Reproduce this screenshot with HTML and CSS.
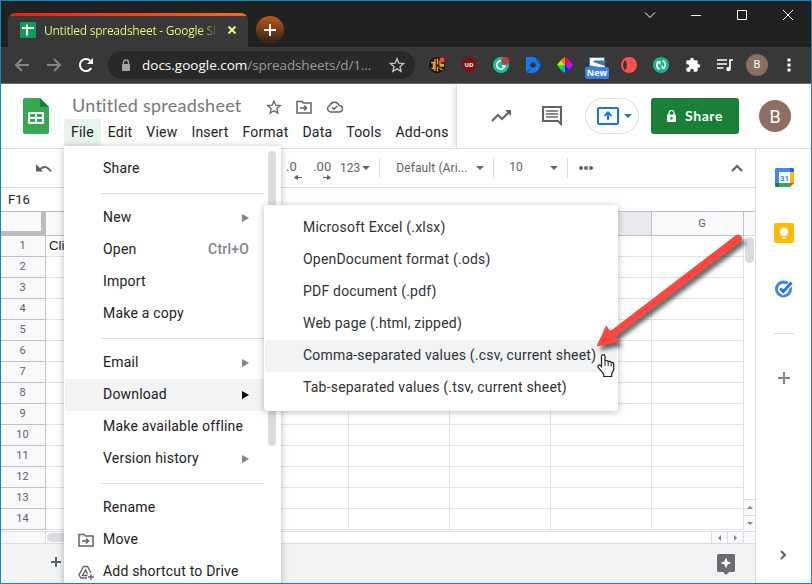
FILE: index.html
```html
<!DOCTYPE html>
<html lang="en">
<head>
  <meta charset="UTF-8" />
  <meta name="viewport" content="width=device-width, initial-scale=1.0"/>
  <title>Untitled spreadsheet - Google Sheets</title>
  <link rel="stylesheet" href="styles.css">
</head>
<body>
<div class="window">

  <!-- Tab strip -->
  <div class="titlebar">
    <div class="tab">
      <svg class="favicon" width="16" height="16" viewBox="0 0 16 16"><rect width="16" height="16" rx="1" fill="#0f9d58"/><path d="M2 6h12M7 2.5v11" stroke="#fff" stroke-width="2"/></svg>
      <span class="tab-title">Untitled spreadsheet - Google Sh</span>
      <svg class="tab-close" width="10" height="10" viewBox="0 0 10 10"><path d="M1.5 1.5l7 7M8.500 1.500l-7 7" stroke="#f4ff70" stroke-width="1.8"/></svg>
    </div>
    <div class="new-tab"><svg width="28" height="28" viewBox="0 0 28 28"><path d="M14 8v12M8 14h12" stroke="#fff" stroke-width="2"/></svg></div>
    <div class="win-buttons">
      <svg width="12" height="12" viewBox="0 0 12 12"><path d="M1 3.500l5 5 5-5"/></svg>
      <svg width="12" height="12" viewBox="0 0 12 12"><path d="M1 6.500h10"/></svg>
      <svg width="12" height="12" viewBox="0 0 12 12"><path d="M1.500 1.500h9v9h-9z"/></svg>
      <svg width="12" height="12" viewBox="0 0 12 12"><path d="M1 1l10 10M11 1L1 11"/></svg>
    </div>
  </div>

  <!-- Address bar -->
  <div class="browserbar">
    <div class="nav-icons">
      <svg width="16" height="16" viewBox="0 0 16 16"><path d="M15 8H2M8 2L2 8l6 6" stroke="#858585"/></svg>
      <svg width="16" height="16" viewBox="0 0 16 16"><path d="M1 8h13M8 2l6 6-6 6" stroke="#858585"/></svg>
      <svg width="16" height="16" viewBox="0 0 16 16"><path d="M13.200 11A6 6 0 1 1 12.200 3.800" stroke="#fff" stroke-width="2.200"/><path d="M15 1v6H9z" fill="#fff"/></svg>
    </div>
    <div class="omnibox">
      <svg width="10" height="13" viewBox="0 0 10 13"><path d="M2.500 6V3.500a2.500 2.500 0 0 1 5 0V6" fill="none" stroke="#a5a5a5" stroke-width="1.400"/><rect x="1" y="5" width="8" height="7" rx="1" fill="#a5a5a5"/></svg>
      <span class="url"><b>docs.google.com</b>/spreadsheets/d/1...</span>
      <svg class="bookmark" width="16" height="16" viewBox="0 0 24 24"><path d="M12 2.500l2.800 6.700 7.200.6-5.500 4.700 1.700 7.100-6.200-3.800-6.200 3.800 1.700-7.100L2 9.800l7.200-.6z" fill="none" stroke="#c4c4c4" stroke-width="2"/></svg>
    </div>
    <div class="extensions">
      <svg width="16" height="16" viewBox="0 0 16 16"><circle cx="8" cy="8" r="8" fill="#181410"/><path d="M2 5.500h2.500v6H2.500M6 2v12M8.500 1.500v6M8.500 9.500v5M11 4v3.500h4M10.500 9h4.500M10.500 11l3 2" fill="none" stroke="#f3a52b" stroke-width="1.400"/><circle cx="13" cy="3" r="2.500" fill="#f44"/></svg>
      <svg width="16" height="16" viewBox="0 0 16 16"><path d="M8 0c2 1.300 4 2 7 2v5c0 4-2.500 7-7 9-4.500-2-7-5-7-9V2c3 0 5-.7 7-2z" fill="#800f12"/><text x="8" y="9.500" text-anchor="middle" class="ublock">UD</text></svg>
      <svg width="16" height="16" viewBox="0 0 16 16"><circle cx="8" cy="8" r="8" fill="#15c39a"/><path d="M10 4.300A4.200 4.200 0 1 0 12 9H9" fill="none" stroke="#fff" stroke-width="1.600"/><circle cx="12" cy="4" r="3.300" fill="#6d5750" stroke="#e0343f" stroke-width="1.300"/><path d="M10 6l4-4" stroke="#e0343f" stroke-width="1.300"/></svg>
      <svg width="16" height="16" viewBox="0 0 16 16"><path d="M1 0h6a8 8 0 1 1 0 16H1z" fill="#1778f2"/><circle cx="8" cy="8" r="2.700" fill="#333"/><path d="M1 16l4-3.500M11 2l2 2M12 5l2 1" stroke="#0a3b8c"/></svg>
      <svg width="16" height="16" viewBox="0 0 16 16"><path d="M8 8V0l4 3z" fill="#e11"/><path d="M8 8l4-5 4 5z" fill="#e0c"/><path d="M8 8h8l-4 5z" fill="#92f"/><path d="M8 8l4 5-4 3z" fill="#12d"/><path d="M8 8v8l-4-3z" fill="#1bb"/><path d="M8 8l-4 5-4-5z" fill="#1e2"/><path d="M8 8H0l4-5z" fill="#dd2"/><path d="M8 8L4 3l4-3z" fill="#f70"/></svg>
      <div class="ext-new">
        <svg width="16" height="11" viewBox="0 0 16 11"><path d="M0 0h16v11H0z" fill="#3d77a8"/><path d="M1 1h14v2.500H6q-1.500 0-1.500 1t2 1.200L16 9v2L1 8.500z" fill="#fff"/></svg>
        <span>New</span>
      </div>
      <svg width="16" height="16" viewBox="0 0 16 16"><circle cx="8" cy="8" r="8" fill="#ff4d50"/><path d="M4 2.800a8 8 0 0 1 0 10.400 8 8 0 0 1 0-10.400z" fill="#4a3030"/></svg>
      <svg width="16" height="16" viewBox="0 0 16 16"><circle cx="8" cy="8" r="8" fill="#15b88b"/><path d="M6.500 12.300A4.500 4.500 0 0 1 5 5M9.500 3.700A4.500 4.500 0 0 1 11 11" fill="none" stroke="#fff" stroke-width="1.800"/><path d="M3.500 4h4v4zM12.500 12h-4V8z" fill="#fff"/></svg>
      <svg width="16" height="16" viewBox="0 0 24 24"><path d="M20.500 11H19V7c0-1.100-.9-2-2-2h-4V3.500a2.500 2.500 0 0 0-5 0V5H4c-1.100 0-2 .9-2 2v3.800h1.500a2.700 2.700 0 0 1 0 5.400H2V20c0 1.100.9 2 2 2h3.800v-1.500a2.700 2.700 0 0 1 5.400 0V22H17c1.100 0 2-.9 2-2v-4h1.500a2.500 2.500 0 0 0 0-5z" fill="#fff"/></svg>
      <svg width="16" height="16" viewBox="0 0 16 16"><path d="M0 3h10M0 7h10M0 11h6.500M13 12V3h3" fill="none" stroke="#fff" stroke-width="1.700"/><circle cx="11.500" cy="12" r="2.300" fill="#fff"/></svg>
      <span class="avatar avatar-small">B</span>
      <svg width="4" height="14" viewBox="0 0 4 14"><path d="M.5.500h3v3h-3zM.5 5.500h3v3h-3zM.5 10.500h3v3h-3z" fill="#fff"/></svg>
    </div>
  </div>

  <!-- Sheets header -->
  <header class="doc-header">
    <svg class="logo" width="26" height="36" viewBox="0 0 26 36"><path d="M2 0h15l9 9v25a2 2 0 0 1-2 2H2a2 2 0 0 1-2-2V2a2 2 0 0 1 2-2z" fill="#34a853"/><path d="M17 0l9 9h-9z" fill="#188038"/><path d="M5 14h16v12H5zM7 16v3h5v-3zM14 16v3h5v-3zM7 21v3h5v-3zM14 21v3h5v-3z" fill="#fff" fill-rule="evenodd"/></svg>
    <div class="doc-info">
      <div class="doc-title">
        <span>Untitled spreadsheet</span>
        <svg width="16" height="16" viewBox="0 0 24 24"><path d="M12 3l2.700 6.300 6.800.6-5.200 4.500 1.600 6.700-5.900-3.600-5.900 3.600 1.600-6.700-5.200-4.500 6.800-.6z" stroke-width="2"/></svg>
        <svg width="16" height="14" viewBox="0 0 16 14"><path d="M1 1.500h5l1.500 1.500H15v10H1zM4 8h6M8 5.500L10.500 8 8 10.500" stroke-width="1.500"/></svg>
        <svg width="17" height="12" viewBox="0 0 24 17"><path d="M6 15.500a5 5 0 0 1-.5-9.500A7 7 0 0 1 18.500 6.500a4.500 4.500 0 0 1 .5 9zM8.500 9l2.700 2.700L16 7" stroke-width="2"/></svg>
      </div>
      <nav class="menubar">
        <a class="active">File</a><a>Edit</a><a>View</a><a>Insert</a><a>Format</a><a>Data</a><a>Tools</a><a>Add-ons</a>
      </nav>
    </div>
    <div class="header-actions">
      <svg class="trend" width="20" height="14" viewBox="0 0 20 14"><path d="M1 12l6-6 4 4 7-7" fill="none" stroke="#5f6368" stroke-width="2"/><path d="M14 1h6v6z" fill="#5f6368"/></svg>
      <svg class="comment" width="20" height="20" viewBox="0 0 20 20"><path d="M1 1h18v17l-3-3H1z" fill="none" stroke="#5f6368" stroke-width="2"/><path d="M4 5h12M4 8h12M4 11h12" stroke="#5f6368" stroke-width="1.600"/></svg>
      <div class="present">
        <svg width="22" height="18" viewBox="0 0 22 18"><rect x="1" y="1" width="20" height="16" rx="1" fill="none" stroke="#1a73e8" stroke-width="2"/><path d="M11 13V6M7.500 9L11 5.500 14.500 9" fill="none" stroke="#1a73e8" stroke-width="2"/></svg>
        <span class="caret blue"></span>
      </div>
      <button class="share"><svg width="9" height="12" viewBox="0 0 9 12"><path d="M2 5V3a2.500 2.500 0 0 1 5 0v2" fill="none" stroke="#fff" stroke-width="1.200"/><rect y="4.500" width="9" height="7.500" rx="1" fill="#fff"/><circle cx="4.500" cy="8.200" r="1.200" fill="#188038"/></svg>Share</button>
      <span class="avatar">B</span>
    </div>
  </header>

  <div class="main">
    <div class="sheet">
      <div class="toolbar">
        <svg class="undo" width="16" height="9" viewBox="0 0 16 9"><path d="M3 6.500Q9-1 15 7.500" fill="none" stroke="#5f6368" stroke-width="2"/><path d="M0 0v7.500h7z" fill="#5f6368"/></svg>
        <span class="decimal">.0<svg width="8" height="5" viewBox="0 0 8 5"><path d="M2 2.500h6M3.500.5l-3 2 3 2z" stroke="#5f6368" fill="#5f6368"/></svg></span>
        <span class="decimal more">.00<svg width="8" height="5" viewBox="0 0 8 5"><path d="M0 2.500h6M4.500.500l3 2-3 2z" stroke="#5f6368" fill="#5f6368"/></svg></span>
        <span class="formats">123</span><span class="caret"></span>
        <span class="divider"></span>
        <span class="font-name">Default (Ari...</span><span class="caret"></span>
        <span class="divider"></span>
        <span class="font-size">10</span><span class="caret"></span>
        <span class="divider"></span>
        <span class="dots"><i></i><i></i><i></i></span>
        <svg class="collapse" width="12" height="8" viewBox="0 0 12 8"><path d="M1 7l5-5 5 5" fill="none" stroke="#5f6368" stroke-width="2.200"/></svg>
      </div>
      <div class="name-box">F16</div>
      <div class="grid-area">
        <div class="grid" id="grid">
          <div class="row head">
            <span class="corner"></span><span></span><span></span><span></span><span></span><span></span><span class="selected"></span><span>G</span>
          </div>
        </div>
        <div class="vscroll">
          <span class="vhead"></span>
          <span class="vthumb"></span>
          <span class="vbtn"><i class="tri up"></i></span>
          <span class="vbtn"><i class="tri down"></i></span>
        </div>
      </div>
      <div class="hscroll">
        <span class="hcorner"></span>
        <span class="hthumb"></span>
        <span class="hbtn"><i class="tri left"></i></span>
        <span class="hbtn"><i class="tri right"></i></span>
        <span class="hend"></span>
      </div>
      <div class="sheet-tabs">
        <svg width="10" height="10" viewBox="0 0 10 10"><path d="M5 0v10M0 5h10" stroke="#5f6368" stroke-width="2"/></svg>
        <svg class="explore" width="18" height="21" viewBox="0 0 18 21"><path d="M1.500 0h15A1.500 1.500 0 0 1 18 1.500v15a1.500 1.500 0 0 1-1.500 1.500H12l-3 3-3-3H1.500A1.500 1.500 0 0 1 0 16.500v-15A1.500 1.500 0 0 1 1.500 0z" fill="#6b6d70"/><path d="M9 3.500l1.600 3.900L14.500 9l-3.900 1.600L9 14.500l-1.600-3.900L3.500 9l3.900-1.600z" fill="#fff"/></svg>
      </div>
    </div>

    <!-- Side panel -->
    <aside class="side">
      <svg width="19" height="19" viewBox="0 0 19 19"><path d="M1 0h14v4H4v11H0V1z" fill="#4285f4"/><path d="M15 0h3l1 1v3h-4z" fill="#1967d2"/><path d="M15 4h4v11h-4z" fill="#fbbc04"/><path d="M4 15h11v4H4z" fill="#34a853"/><path d="M0 15h4v4H1l-1-1z" fill="#188038"/><path d="M15 15h4l-4 4z" fill="#ea4335"/><path d="M4 4h11v11H4z" fill="#fff"/><text x="9.500" y="12.500" text-anchor="middle" class="cal-day">31</text></svg>
      <svg width="20" height="20" viewBox="0 0 20 20"><rect width="20" height="20" rx="2" fill="#fbbc04"/><path d="M10 4.500a4.200 4.200 0 0 1 2.400 7.700V13H7.600v-.8A4.200 4.200 0 0 1 10 4.500zM8 14h4v1.500H8z" fill="#fff"/></svg>
      <svg width="18" height="18" viewBox="0 0 18 18"><circle cx="8.500" cy="9" r="7" fill="none" stroke="#3b82f0" stroke-width="3"/><path d="M4.500 8.500l3.500 3.500 9-9.500" fill="none" stroke="#fff" stroke-width="5"/><path d="M5.200 8.500L8.300 11.600 16.500 2.500" fill="none" stroke="#2372e4" stroke-width="2.800"/></svg>
      <hr>
      <svg width="12" height="12" viewBox="0 0 12 12"><path d="M6 0v12M0 6h12" stroke="#80868b" stroke-width="2"/></svg>
      <svg class="expand" width="7" height="10" viewBox="0 0 7 10"><path d="M1 1l4 4-4 4" fill="none" stroke="#5f6368" stroke-width="2"/></svg>
    </aside>
  </div>

  <!-- File menu -->
  <div class="menu file-menu">
    <div class="item">Share</div>
    <hr>
    <div class="item">New<i class="arrow"></i></div>
    <div class="item">Open<span class="shortcut">Ctrl+O</span></div>
    <div class="item">Import</div>
    <div class="item">Make a copy</div>
    <hr>
    <div class="item">Email<i class="arrow"></i></div>
    <div class="item hover">Download<i class="arrow"></i></div>
    <div class="item">Make available offline</div>
    <div class="item">Version history<i class="arrow"></i></div>
    <hr>
    <div class="item">Rename</div>
    <div class="item"><svg width="16" height="14" viewBox="0 0 16 14"><path d="M1 1.500h5l1.500 1.500H15v10H1zM4 8h6M8 5.500L10.500 8 8 10.500" stroke-width="1.500"/></svg>Move</div>
    <div class="item"><svg width="16" height="15" viewBox="0 0 16 15"><path d="M9 13H3L1 10 5.500 1.500h4L13 8M9.500 10.500h-5L7.500 5l2 4M10 12h6M13 9v6" stroke-width="1.300"/></svg>Add shortcut to Drive</div>
    <span class="menu-thumb"></span>
  </div>

  <!-- Download submenu -->
  <div class="menu submenu">
    <div class="item">Microsoft Excel (.xlsx)</div>
    <div class="item">OpenDocument format (.ods)</div>
    <div class="item">PDF document (.pdf)</div>
    <div class="item">Web page (.html, zipped)</div>
    <div class="item hover">Comma-separated values (.csv, current sheet)</div>
    <div class="item">Tab-separated values (.tsv, current sheet)</div>
  </div>

  <!-- Pointer arrow and hand cursor -->
  <svg class="callout" width="170" height="160" viewBox="590 225 170 160">
    <path class="red-arrow" d="M735.500 235.400a4 4 0 0 1 4.800 6.400L615 336.500l4.500 5.500-23 4.500 9.500-21 4.500 5.500z" fill="#fe4641"/>
    <path d="M601.500 356.500c0-2.500 3.500-2.500 3.500 0v5c.5-1.500 3-1.300 3.200.4.700-1 2.700-.8 3 .8 1-.7 2.500 0 2.500 1.500v5.300l-2 4.500v2.500h-8v-2.500l-5.500-6.500c-1.200-1.700.8-3.300 2.300-2l1 1.200z" fill="#fff" stroke="#222" stroke-width="1.200"/>
    <path d="M605 361.500v4.500M608.200 362.500v3.500M611.200 363.500v3" stroke="#222"/>
  </svg>

</div>

<script>
  // rows of the sheet, columns A to G
  const grid = document.getElementById('grid');
  for (let r = 1; r <= 14; r++) {
    const row = document.createElement('div');
    row.className = 'row';
    for (let c = 0; c < 8; c++) {
      const cell = document.createElement('span');
      if (c === 0) {
        cell.className = 'num';
        cell.textContent = r;
      }
      if (r === 1 && c === 1) cell.textContent = 'Cli';
      row.appendChild(cell);
    }
    grid.appendChild(row);
  }
</script>
</body>
</html>
```
FILE: styles.css
```css
* {
  margin: 0;
  box-sizing: border-box;
}
body {
  font-family: Roboto, 'Liberation Sans', sans-serif;
  overflow: hidden;
}
svg {
  display: block;
  flex: none;
}

.window {
  position: relative;
  width: 812px;
  height: 584px;
  border: 1px solid #0b8ac4;
  background: white;
  display: flex;
  flex-direction: column;
  overflow: hidden;
}

/* Tab strip */
.titlebar {
  height: 46px;
  flex: none;
  background: #212121;
  display: flex;
  padding-left: 7px;
}
.tab {
  width: 240px;
  height: 34px;
  margin-top: 12px;
  border-radius: 7px 7px 0 0;
  background: linear-gradient(90deg, #ff1508, #ff6a05) top / 100% 3px no-repeat #383838;
  display: flex;
  align-items: center;
  padding: 0 11px 0 12px;
}
.tab-title {
  flex: 1;
  margin: 0 6px 0 8px;
  font: 12px 'Open Sans', 'Noto Sans', sans-serif;
  letter-spacing: -0.25px;
  white-space: nowrap;
  color: transparent;
  background: linear-gradient(90deg, #f4ff70 88%, #383838 98%);
  background-clip: text;
  -webkit-background-clip: text;
}
.new-tab {
  width: 28px;
  height: 28px;
  margin: 15px 0 0 8px;
  border-radius: 50%;
  background: linear-gradient(#b95a16, #2b211b);
}
.win-buttons {
  margin-left: auto;
  display: flex;
  gap: 34px;
  padding: 8px 17px 0 0;
}
.win-buttons path {
  fill: none;
  stroke: white;
}

/* Address bar */
.browserbar {
  height: 37px;
  flex: none;
  background: #383838;
  border-bottom: 1px solid #6a6a6a;
  display: flex;
  align-items: center;
}
.nav-icons {
  display: flex;
  gap: 16px;
  margin-left: 13px;
}
.nav-icons path {
  stroke-width: 2;
}
.nav-icons path:not([fill]) {
  fill: none;
}
.omnibox {
  width: 307px;
  height: 28px;
  margin-left: 14px;
  border-radius: 14px;
  background: #292929;
  display: flex;
  align-items: center;
  padding: 0 10px 0 13px;
}
.url {
  margin-left: 11px;
  font: 13.5px 'Open Sans', 'Noto Sans', sans-serif;
  letter-spacing: -0.12px;
  color: #9a9a9a;
  white-space: nowrap;
}
.url b {
  font-weight: 400;
  letter-spacing: 0;
  color: white;
}
.bookmark {
  margin-left: auto;
}
.extensions {
  display: flex;
  align-items: center;
  gap: 16px;
  margin-left: 14px;
}
.ublock {
  font: bold 6px 'Open Sans', sans-serif;
  fill: white;
}
.ext-new {
  width: 24px;
  margin: 0 -4px;
  display: flex;
  flex-direction: column;
  align-items: center;
  margin-top: 6px;
}
.ext-new span {
  width: 24px;
  height: 12px;
  margin-top: -1px;
  border-radius: 2px;
  background: #3880e8;
  color: white;
  font: bold 9px/12px 'Open Sans', sans-serif;
  text-align: center;
}
.avatar {
  width: 32px;
  height: 32px;
  border-radius: 50%;
  background: #8d6e63;
  color: white;
  font-size: 18px;
  line-height: 33px;
  text-align: center;
}
.avatar-small {
  width: 22px;
  height: 22px;
  font-size: 11px;
  line-height: 22px;
  margin: 0 3px 0 -3px;
}

/* Sheets header */
.doc-header {
  height: 65px;
  flex: none;
  border-bottom: 1px solid #dadce0;
  display: flex;
}
.logo {
  margin: 14px 0 0 22px;
}
.doc-info {
  width: 407px;
  padding: 10px 0 0 15px;
}
.doc-title {
  height: 25px;
  padding-left: 8px;
  display: flex;
  align-items: center;
  gap: 14px;
  white-space: nowrap;
  color: #777;
  font: 18px Lato, sans-serif;
}
.doc-title span {
  width: 181px;
  margin-top: -3px;
  letter-spacing: 0.26px;
}
.doc-title span, .doc-title svg {
  flex: none;
}
.doc-title svg:nth-of-type(1) {
  margin-left: -1px;
}
.doc-title path, .item svg path {
  fill: none;
  stroke: #5f6368;
}
.menubar {
  display: flex;
}
.menubar a {
  padding: 0 7px;
  height: 29px;
  font-size: 14px;
  line-height: 26px;
  letter-spacing: 0.2px;
  color: #202124;
  border-radius: 3px 3px 0 0;
}
.menubar .active {
  background: #e6f4ea;
}
.header-actions {
  flex: 1;
  border-left: 1px solid #dadce0;
  box-shadow: -3px 0 4px rgba(60, 64, 67, 0.12);
  clip-path: inset(0 0 0 -8px);
  display: flex;
  align-items: center;
  padding-left: 34px;
}
.comment {
  margin-left: 31px;
}
.present {
  width: 54px;
  height: 36px;
  margin-left: 23px;
  border: 1px solid #dadce0;
  border-radius: 18px;
  display: flex;
  align-items: center;
  padding-left: 11px;
  gap: 5px;
}
.caret {
  flex: none;
  border: 4px solid transparent;
  border-top-color: #5f6368;
  border-bottom: 0;
}
.caret.blue {
  border-top-color: #1a73e8;
}
.share {
  width: 88px;
  height: 36px;
  margin: 0 20px 0 12px;
  padding: 0 0 1px;
  border: none;
  border-radius: 3px;
  background: #1a8038;
  color: white;
  font: bold 14px Lato, sans-serif;
  letter-spacing: 0.6px;
  display: flex;
  align-items: center;
  justify-content: center;
  gap: 9px;
}

.main {
  flex: 1;
  display: flex;
  min-height: 0;
}
.sheet {
  width: 755px;
  border-right: 1px solid #dadce0;
  display: flex;
  flex-direction: column;
}

/* Toolbar */
.toolbar {
  height: 39px;
  border-bottom: 1px solid #dadce0;
  display: flex;
  align-items: center;
  color: #5f6368;
  font-size: 12px;
  letter-spacing: 0.1px;
  padding-left: 35px;
}
.decimal {
  width: 16px;
  height: 22px;
  margin-left: 234px;
  font-size: 13px;
  line-height: 20px;
  display: flex;
  flex-direction: column;
}
.decimal svg {
  align-self: flex-end;
  margin-top: -2px;
}
.decimal.more {
  width: 18px;
  margin-left: 11px;
}
.formats {
  margin-left: 9px;
  margin-right: 2px;
  letter-spacing: 0;
}
.divider {
  width: 1px;
  height: 20px;
  background: #dadce0;
  margin-left: 9px;
}
.font-name {
  width: 80px;
  margin-left: 16px;
  white-space: nowrap;
}
.font-size {
  width: 41px;
  margin-left: 15px;
  margin-top: -2px;
}
.dots {
  display: flex;
  gap: 1px;
  margin-left: 11px;
}
.dots i {
  width: 4px;
  height: 4px;
  border-radius: 50%;
  background: #5f6368;
}
.collapse {
  margin: 0 12px 0 auto;
}
.name-box {
  height: 24px;
  border-bottom: 1px solid #c0c0c0;
  padding-left: 7px;
  font-size: 13px;
  line-height: 24px;
  color: #202124;
}

/* Grid */
.grid-area {
  height: 320px;
  display: flex;
  border-bottom: 1px solid #dadce0;
}
.row {
  display: grid;
  grid-template-columns: 45px repeat(6, 101px) 92px;
}
.row span {
  height: 21px;
  border-right: 1px solid #e1e1e1;
  border-bottom: 1px solid #e1e1e1;
  font: 13.3px/20px 'Liberation Sans', sans-serif;
  color: #202124;
  padding-left: 3px;
}
.row .num {
  background: #f8f9fa;
  border-color: #c0c0c0;
  color: #5f6368;
  font: 11px/19px Roboto, sans-serif;
  text-align: center;
  padding: 0 1px 0 0;
}
.head span {
  height: 24px;
  background: #f8f9fa;
  border-color: #c0c0c0;
  color: #5f6368;
  font: 11px/23px Roboto, sans-serif;
  text-align: center;
  padding: 0 0 0 9px;
}
.head .selected {
  background: #e8eaed;
}
.head .corner {
  border-right: 5px solid #bcbcbc;
  border-bottom: 5px solid #bcbcbc;
}
.vscroll {
  width: 11px;
  display: flex;
  flex-direction: column;
}
.vhead {
  height: 24px;
  background: #f8f9fa;
  border-bottom: 1px solid #dadce0;
}
.vthumb {
  width: 9px;
  height: 26px;
  margin: 1px 1px auto;
  border-radius: 5px;
  background: #dadce0;
}
.vbtn, .hbtn {
  background: #f8f9fa;
  display: flex;
  align-items: center;
  justify-content: center;
}
.vbtn {
  height: 16px;
  border-top: 1px solid #dadce0;
}
.hscroll {
  height: 12px;
  border-bottom: 1px solid #dadce0;
  display: flex;
}
.hcorner {
  width: 45px;
  background: #f8f9fa;
  border-right: 1px solid #dadce0;
}
.hthumb {
  width: 120px;
  height: 9px;
  margin: 1px auto 1px 1px;
  border-radius: 5px;
  background: #dadce0;
}
.hbtn {
  width: 16px;
  border-left: 1px solid #dadce0;
}
.hend {
  width: 12px;
  background: #f8f9fa;
  border-left: 1px solid #dadce0;
}
.tri {
  border: 3px solid transparent;
}
.tri.up {
  border-bottom-color: #80868b;
  border-top: 0;
}
.tri.down {
  border-top-color: #80868b;
  border-bottom: 0;
}
.tri.left {
  border-right-color: #80868b;
  border-left: 0;
}
.tri.right {
  border-left-color: #80868b;
  border-right: 0;
}
.sheet-tabs {
  flex: 1;
  background: #f1f3f4;
  display: flex;
  justify-content: space-between;
  align-items: center;
  padding: 0 20px 3px 50px;
}
.explore {
  margin-top: 4px;
}

/* Side panel */
.side {
  flex: 1;
  display: flex;
  flex-direction: column;
  align-items: center;
  padding: 19px 0 23px 1px;
}
.side svg:nth-of-type(2) {
  margin-top: 36px;
}
.side svg:nth-of-type(3) {
  margin-top: 37px;
}
.side hr {
  width: 20px;
  border: none;
  border-top: 1px solid #dadce0;
  margin: 35px 0 38px;
}
.side .expand {
  margin-top: auto;
  margin-right: 1px;
}
.cal-day {
  font: bold 8px Roboto, sans-serif;
  fill: #3f86ee;
}

/* Menus */
.menu {
  position: absolute;
  background: white;
  border: 1px solid #fff;
  padding: 6px 0;
  box-shadow: 0 1px 7px rgba(0, 0, 0, 0.28);
  color: #202124;
  font-size: 14px;
  letter-spacing: 0.2px;
}
.file-menu {
  left: 63px;
  top: 145px;
  width: 217px;
  height: 460px;
}
.file-menu hr {
  border: none;
  border-top: 1px solid #dadce0;
  margin: 8px 16px 8px 36px;
}
.item {
  position: relative;
  height: 32px;
  line-height: 31px;
  padding-left: 38px;
  white-space: nowrap;
}
.item.hover {
  background: #f1f3f4;
}
.item svg {
  position: absolute;
  left: 13px;
  top: 9px;
}
.shortcut {
  position: absolute;
  right: 31px;
  color: #80868b;
  font-weight: 500;
}
.arrow {
  position: absolute;
  right: 31px;
  top: 12px;
  border: 4px solid transparent;
  border-left: 7px solid #80868b;
  border-right: 0;
}
.hover .arrow {
  border-left-color: #000;
}
.menu-thumb {
  position: absolute;
  left: 203px;
  top: 4px;
  width: 8px;
  height: 295px;
  border-radius: 4px;
  background: #dadce0;
}
.submenu {
  left: 263px;
  top: 204px;
  width: 354px;
  height: 206px;
  border-radius: 3px;
  color: #303134;
}

.callout {
  position: absolute;
  left: 589px;
  top: 224px;
}
.red-arrow {
  filter: drop-shadow(3px 4px 2px rgba(0, 0, 0, 0.6));
}
```
